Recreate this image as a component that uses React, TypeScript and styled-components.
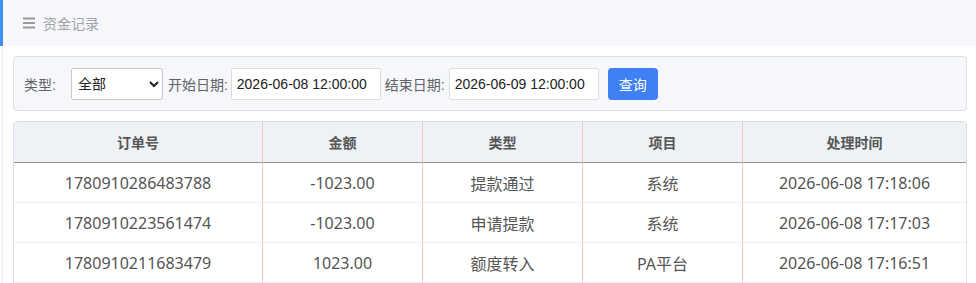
import styled, { createGlobalStyle } from "styled-components";

const GlobalStyle = createGlobalStyle`
  body {
    margin: 0;
    background: #fff;
    font-family: "Liberation Sans", "Noto Sans CJK SC", sans-serif;
  }
`;

const Page = styled.div`
  width: 976px;
  height: 283px;
  overflow: hidden;
`;

const TopBar = styled.div`
  height: 46px;
  display: flex;
  align-items: center;
  padding-left: 20px;
  background: #f5f7fa;
  border-left: 3px solid #3f8ef0;
  box-sizing: border-box;
  color: #a0a3a8;
  font-size: 14px;
`;

const MenuIcon = styled.svg`
  width: 12px;
  height: 12px;
  margin-right: 8px;
`;

const Content = styled.div`
  margin-left: 2px;
  border-left: 1px solid #ececec;
  padding: 10px 9px 0 10px;
`;

const FilterPanel = styled.div`
  display: flex;
  align-items: center;
  height: 55px;
  box-sizing: border-box;
  padding: 0 10px;
  background: #f5f7fa;
  border: 1px solid #dcdfe6;
  border-radius: 4px;
  font-size: 14px;
`;

const Label = styled.span<{ $gap?: number }>`
  color: #606266;
  margin-right: ${(p) => p.$gap ?? 3}px;
`;

const Select = styled.select`
  width: 92px;
  height: 32px;
  margin-right: 5px;
  padding: 0 2px;
  font-size: 14px;
  font-family: inherit;
  color: #222;
  background: #fff;
  border: 1px solid #c8c8c8;
  border-radius: 2px;
`;

const DateInput = styled.input`
  width: 150px;
  height: 32px;
  box-sizing: border-box;
  margin-right: 4px;
  padding: 0 5px;
  font-size: 14px;
  font-family: inherit;
  color: #222;
  background: #fff;
  border: 1px solid #dcdcdc;
  border-radius: 2px;
`;

const SearchButton = styled.button`
  width: 50px;
  height: 32px;
  margin-left: 5px;
  border: none;
  border-radius: 4px;
  background: #4080f5;
  color: #fff;
  font-size: 14px;
  font-family: inherit;
`;

const Table = styled.table`
  width: 954px;
  margin-top: 10px;
  border-collapse: separate;
  border-spacing: 0;
  table-layout: fixed;
  border: 1px solid #dcdfe6;
  border-bottom: none;
  border-radius: 4px 4px 0 0;
  font-family: "Noto Sans", "Noto Sans CJK SC", sans-serif;
  font-size: 16px;
`;

const HeadCell = styled.th<{ $first?: boolean }>`
  height: 40px;
  padding: 0;
  background: #eef1f5;
  color: #555;
  font-family: "Liberation Sans", "Noto Sans CJK SC", sans-serif;
  font-size: 14px;
  font-weight: bold;
  text-align: center;
  border-bottom: 1px solid #9a9494;
  border-left: ${(p) => (p.$first ? "none" : "1px solid #f7c4c4")};
`;

const Cell = styled.td<{ $first?: boolean }>`
  height: 39px;
  padding: 0;
  color: #555;
  text-align: center;
  border-bottom: 1px solid #ebeef5;
  border-left: ${(p) => (p.$first ? "none" : "1px solid #f7c4c4")};
`;

const columns = ["订单号", "金额", "类型", "项目", "处理时间"];
const widths = [248, 160, 160, 160, 224];

const rows = [
  ["1780910286483788", "-1023.00", "提款通过", "系统", "2026-06-08 17:18:06"],
  ["1780910223561474", "-1023.00", "申请提款", "系统", "2026-06-08 17:17:03"],
  ["1780910211683479", "1023.00", "额度转入", "PA平台", "2026-06-08 17:16:51"],
];

const App = () => {
  return (
    <Page>
      <GlobalStyle />
      <TopBar>
        <MenuIcon viewBox="0 0 12 12">
          <rect x="0" y="0.5" width="12" height="2" fill="#999" />
          <rect x="0" y="5" width="12" height="2" fill="#999" />
          <rect x="0" y="9.5" width="12" height="2" fill="#999" />
        </MenuIcon>
        资金记录
      </TopBar>
      <Content>
        <FilterPanel>
          <Label $gap={15}>类型:</Label>
          <Select defaultValue="all">
            <option value="all">全部</option>
          </Select>
          <Label>开始日期:</Label>
          <DateInput defaultValue="2026-06-08 12:00:00" />
          <Label $gap={4}>结束日期:</Label>
          <DateInput defaultValue="2026-06-09 12:00:00" />
          <SearchButton>查询</SearchButton>
        </FilterPanel>
        <Table>
          <colgroup>
            {widths.map((w, i) => (
              <col key={i} style={{ width: w }} />
            ))}
          </colgroup>
          <thead>
            <tr>
              {columns.map((c, i) => (
                <HeadCell key={c} $first={i === 0}>
                  {c}
                </HeadCell>
              ))}
            </tr>
          </thead>
          <tbody>
            {rows.map((r) => (
              <tr key={r[0]}>
                {r.map((v, i) => (
                  <Cell key={i} $first={i === 0}>
                    {v}
                  </Cell>
                ))}
              </tr>
            ))}
          </tbody>
        </Table>
      </Content>
    </Page>
  );
};

export default App;
